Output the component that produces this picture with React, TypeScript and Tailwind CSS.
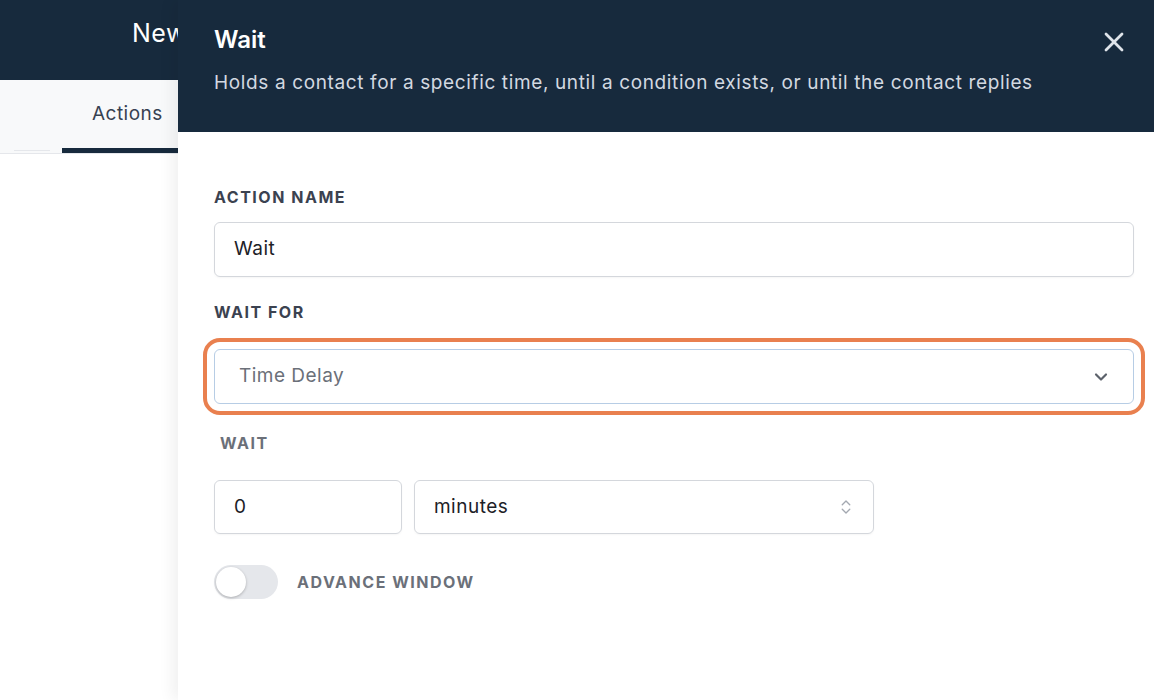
import { ChevronDown, ChevronsUpDown, X } from "lucide-react";

function Label({ children, className = "" }: { children: React.ReactNode; className?: string }) {
  return (
    <div className={`text-[16px] font-bold uppercase leading-6 tracking-[0.095em] ${className}`}>
      {children}
    </div>
  );
}

export default function App() {
  return (
    <div className="relative h-[700px] w-[1154px] overflow-hidden bg-white font-['Inter',sans-serif] tracking-[0.03em]">
      {/* page behind the drawer */}
      <div className="w-[178px] overflow-hidden">
        <div className="flex h-[80px] items-center bg-[#172a3d] pl-[132px] pb-[12px]">
          <span className="whitespace-nowrap text-[25px] text-white">New</span>
        </div>
        <div className="relative flex h-[74px] items-end border-b border-[#e5e7eb] bg-[#f8f9fa]">
          <div className="mb-[2px] ml-[14px] h-px w-[36px] shrink-0 bg-[#e5e7eb]" />
          <div className="ml-[12px] flex h-full shrink-0 flex-col justify-between">
            <div className="flex flex-1 items-center pl-[30px] text-[19px] text-[#374151]">
              Actions
            </div>
            <div className="h-[5px] w-[160px] bg-[#172a3d]" />
          </div>
        </div>
      </div>

      {/* drawer */}
      <div className="absolute inset-y-0 left-[178px] right-0 flex flex-col bg-white shadow-[-6px_0_14px_rgba(0,0,0,0.06)]">
        <div className="relative h-[132px] bg-[#172a3d] px-[36px] pt-[24px]">
          <div className="text-[24px] font-semibold leading-8 tracking-normal text-white">Wait</div>
          <div className="mt-[13px] text-[19px] leading-7 tracking-[0.033em] text-[#d3d9e1]">
            Holds a contact for a specific time, until a condition exists, or until the contact replies
          </div>
          <button className="absolute right-[24px] top-[26px] text-[#dfe4ea]">
            <X size={32} strokeWidth={2.1} />
          </button>
        </div>

        <div className="flex flex-col px-[36px] pt-[53px] pr-[20px]">
          <Label className="text-[#3b4250]">Action Name</Label>
          <div className="mt-[13px] flex h-[55px] items-center rounded-[6px] border border-[#d4d7dc] px-[19px] text-[19px] text-[#1d2127] shadow-[0_1px_2px_rgba(0,0,0,0.04)]">
            Wait
          </div>

          <Label className="mt-[23px] text-[#3b4250]">Wait For</Label>
          <div className="mt-[25px] flex h-[55px] items-center justify-between rounded-[6px] border border-[#b7cde5] pl-[24px] pr-[22px] text-[19px] text-[#6b7079] outline-4 outline-offset-[7px] outline-[#e9804f]">
            <span>Time Delay</span>
            <ChevronDown size={20} strokeWidth={2.6} className="text-[#5c626b]" />
          </div>

          <Label className="ml-[6px] mt-[27px] text-[#6b7079]">Wait</Label>
          <div className="mt-[25px] flex gap-[12px]">
            <div className="flex h-[54px] w-[188px] items-center rounded-[6px] border border-[#d4d7dc] px-[19px] text-[19px] text-[#1d2127] shadow-[0_1px_2px_rgba(0,0,0,0.04)]">
              0
            </div>
            <div className="flex h-[54px] w-[460px] items-center justify-between rounded-[6px] border border-[#d4d7dc] pl-[19px] pr-[18px] text-[19px] text-[#1d2127] shadow-[0_1px_2px_rgba(0,0,0,0.04)]">
              <span>minutes</span>
              <ChevronsUpDown size={18} strokeWidth={1.8} className="text-[#a3a8b0]" />
            </div>
          </div>

          <div className="mt-[31px] flex items-center gap-[19px]">
            <div className="flex h-[34px] w-[64px] items-center rounded-full bg-[#e5e7eb] px-[2px]">
              <div className="h-[30px] w-[30px] rounded-full bg-white shadow-[0_1px_3px_rgba(0,0,0,0.25)]" />
            </div>
            <Label className="text-[#6b7079]">Advance Window</Label>
          </div>
        </div>
      </div>
    </div>
  );
}
